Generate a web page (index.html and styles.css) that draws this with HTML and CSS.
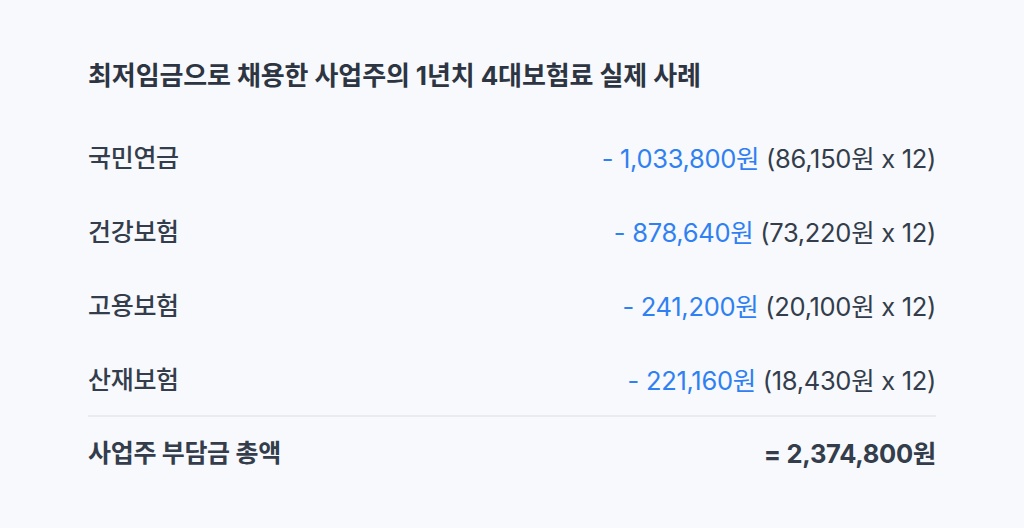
FILE: index.html
```html
<!DOCTYPE html>
<html lang="ko">
<head>
<meta charset="utf-8">
<link rel="stylesheet" href="styles.css">
</head>
<body>
<div class="card">
  <h1 class="title">최저임금으로 채용한 사업주의 1년치 4대보험료 실제 사례</h1>
  <div class="rows">
    <div class="row">
      <span class="label">국민연금</span>
      <span class="value"><span class="minus">- 1,033,800원</span> (86,150원 x 12)</span>
    </div>
    <div class="row">
      <span class="label">건강보험</span>
      <span class="value"><span class="minus">- 878,640원</span> (73,220원 x 12)</span>
    </div>
    <div class="row">
      <span class="label">고용보험</span>
      <span class="value"><span class="minus">- 241,200원</span> (20,100원 x 12)</span>
    </div>
    <div class="row">
      <span class="label">산재보험</span>
      <span class="value"><span class="minus">- 221,160원</span> (18,430원 x 12)</span>
    </div>
  </div>
  <div class="row total">
    <span class="label">사업주 부담금 총액</span>
    <span class="value">= 2,374,800원</span>
  </div>
</div>
</body>
</html>
```

FILE: styles.css
```css
html, body {
  margin: 0;
  padding: 0;
  background: #f7f9fc;
}
body {
  font-family: "Inter", "Noto Sans CJK KR", sans-serif;
  color: #333d4b;
}
.card {
  padding: 64px 88px 0 88px;
}
.title {
  margin: 0 0 31px 0;
  font-size: 26px;
  line-height: 24px;
  font-weight: 700;
  letter-spacing: -0.1px;
  color: #2e3542;
}
.rows {
  border-bottom: 2px solid #e8ebef;
}
.row {
  display: flex;
  justify-content: space-between;
  align-items: center;
  height: 74px;
  font-size: 25px;
  letter-spacing: -0.3px;
}
.label {
  font-weight: 500;
}
.value {
  font-weight: 400;
  font-size: 25.5px;
}
.minus {
  color: #2f80f2;
}
.total {
  height: 68px;
}
.total .label,
.total .value {
  font-weight: 700;
}
```
